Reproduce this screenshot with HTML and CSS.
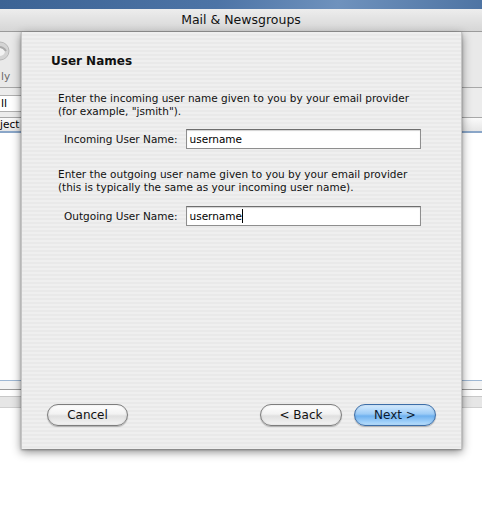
FILE: index.html
```html
<!DOCTYPE html>
<html>
<head>
<meta charset="utf-8">
<link rel="stylesheet" href="styles.css">
<title>Mail &amp; Newsgroups</title>
</head>
<body>
<div class="screen">
  <div class="desk"></div>
  <div class="window">
    <div class="titlebar">Mail &amp; Newsgroups</div>
    <div class="toolbar">
      <div class="tool">
        <svg class="tool-icon" width="20" height="24" viewBox="0 0 20 24">
          <circle cx="6" cy="12" r="9" fill="#d4d4d4" stroke="#b8b8b8" stroke-width="1"/>
          <circle cx="6" cy="12" r="5" fill="#f2f2f2"/>
          <path d="M2 9 Q8 6 12 12" fill="none" stroke="#aaaaaa" stroke-width="2"/>
        </svg>
        <div class="tool-label">ly</div>
      </div>
    </div>
    <div class="filterbar">
      <div class="popup">ll</div>
    </div>
    <div class="colheader">
      <div class="col">ject</div>
    </div>
    <div class="list"></div>
    <div class="status-top"></div>
    <div class="status"></div>
  </div>

  <div class="sheet">
    <h1 class="sheet-title">User Names</h1>
    <p class="para para-first">Enter the incoming user name given to you by your email provider<br>(for example, "jsmith").</p>
    <div class="field-row">
      <label class="field-label">Incoming User Name:</label>
      <div class="field"><span>username</span></div>
    </div>
    <p class="para para-second">Enter the outgoing user name given to you by your email provider<br>(this is typically the same as your incoming user name).</p>
    <div class="field-row field-row-out">
      <label class="field-label">Outgoing User Name:</label>
      <div class="field"><span>username</span><span class="caret"></span></div>
    </div>
    <div class="spacer"></div>
    <div class="buttons">
      <button class="btn btn-cancel">Cancel</button>
      <div class="btn-group">
        <button class="btn">&lt; Back</button>
        <button class="btn btn-default">Next &gt;</button>
      </div>
    </div>
  </div>
</div>
</body>
</html>
```

FILE: styles.css
```css
html, body {
  margin: 0;
  padding: 0;
  background: #ffffff;
}
body {
  font-family: "DejaVu Sans", "Liberation Sans", sans-serif;
  color: #000;
}
.screen {
  position: relative;
  width: 482px;
  height: 506px;
  overflow: hidden;
  background: #ffffff;
}
.desk {
  height: 9px;
  background: linear-gradient(100deg, #3c6394 0%, #4d74a6 45%, #6f92bd 70%, #4e74a3 100%);
}
.window {
  display: flex;
  flex-direction: column;
}
.titlebar {
  height: 22px;
  border-bottom: 1px solid #9b9b9b;
  background: linear-gradient(#ededed, #d6d6d6);
  font-size: 12.5px;
  line-height: 22px;
  text-align: center;
  color: #111;
}
.toolbar {
  height: 55px;
  border-bottom: 1px solid #a8a8a8;
  background: #e9e9e9;
  display: flex;
}
.tool {
  width: 12px;
  display: flex;
  flex-direction: column;
  align-items: flex-start;
  overflow: hidden;
}
.tool-icon {
  margin-top: 7px;
  margin-left: -6px;
  flex: none;
}
.tool-label {
  margin-top: 7px;
  padding-left: 1px;
  font-size: 10.5px;
  color: #6a6a6a;
  white-space: nowrap;
}
.filterbar {
  height: 29px;
  border-bottom: 1px solid #a8a8a8;
  background: #ececec;
  display: flex;
  align-items: center;
}
.popup {
  width: 20px;
  height: 15px;
  margin-top: 1px;
  padding-left: 1px;
  background: #fff;
  border-top: 1px solid #b0b0b0;
  border-bottom: 1px solid #b0b0b0;
  font-size: 11px;
  line-height: 15px;
  white-space: nowrap;
}
.colheader {
  height: 13px;
  border-bottom: 2px solid #8aa6c8;
  background: linear-gradient(#fafafa, #e6e6e6);
  display: flex;
}
.col {
  width: 21px;
  font-size: 10.5px;
  line-height: 13px;
  white-space: nowrap;
}
.list {
  height: 247px;
  background: #ffffff;
}
.status-top {
  height: 8px;
  border-top: 1px solid #9fb8d4;
  border-bottom: 1px solid #9a9a9a;
  background: #f4f4f4;
}
.status {
  height: 10px;
  margin-top: 6px;
  border-top: 1px solid #c8c8c8;
  border-bottom: 1px solid #d0d0d0;
  background: #e6e6e6;
}

/* Sheet */
.sheet {
  position: absolute;
  left: 21px;
  top: 32px;
  width: 441px;
  height: 417px;
  box-sizing: border-box;
  padding: 21px 25px 23px 25px;
  background: repeating-linear-gradient(to bottom, #efefef 0 2px, #e9e9e9 2px 4px);
  border-left: 1px solid #c4c4c4;
  border-right: 1px solid #c4c4c4;
  box-shadow: 0 3px 9px rgba(0,0,0,0.45), 0 1px 2px rgba(0,0,0,0.3);
  display: flex;
  flex-direction: column;
}
.sheet-title {
  margin: 0 0 0 4px;
  font-size: 12px;
  font-weight: bold;
  line-height: 16px;
  color: #111;
}
.para {
  margin: 0 0 0 11px;
  font-size: 10.5px;
  line-height: 13px;
  color: #111;
}
.para-first { margin-top: 23px; }
.para-second { margin-top: 19px; }
.field-row {
  display: flex;
  align-items: center;
  margin: 11px 15px 0 17px;
  gap: 8px;
}
.field-row-out { margin-top: 12px; }
.field-label {
  font-size: 10.5px;
  color: #111;
  white-space: nowrap;
}
.field {
  flex: 1;
  height: 20px;
  box-sizing: border-box;
  border: 1px solid #8e8e8e;
  border-top-color: #6e6e6e;
  background: #ffffff;
  box-shadow: inset 0 1px 1px rgba(0,0,0,0.18);
  padding-left: 3px;
  font-size: 10.5px;
  line-height: 18px;
  display: flex;
  align-items: center;
}
.caret {
  width: 1px;
  height: 14px;
  background: #000;
}
.spacer { flex: 1; }
.buttons {
  display: flex;
  justify-content: space-between;
  align-items: center;
}
.btn-group {
  display: flex;
  gap: 12px;
}
.btn {
  width: 82px;
  height: 22px;
  box-sizing: border-box;
  border-radius: 11px;
  border: 1px solid #7d7d7d;
  background: linear-gradient(#ffffff 0%, #f2f2f2 45%, #e0e0e0 55%, #f4f4f4 100%);
  box-shadow: 0 1px 1px rgba(0,0,0,0.25), inset 0 0 2px rgba(0,0,0,0.15);
  font-family: "DejaVu Sans", "Liberation Sans", sans-serif;
  font-size: 12px;
  color: #111;
  padding: 0;
  line-height: 20px;
}
.btn-cancel { width: 81px; }
.btn-default {
  border-color: #3d6ea8;
  background: linear-gradient(#d6ecff 0%, #9ccbf6 45%, #6fb1ef 55%, #b9e0ff 100%);
  color: #0d1a2e;
}
```
